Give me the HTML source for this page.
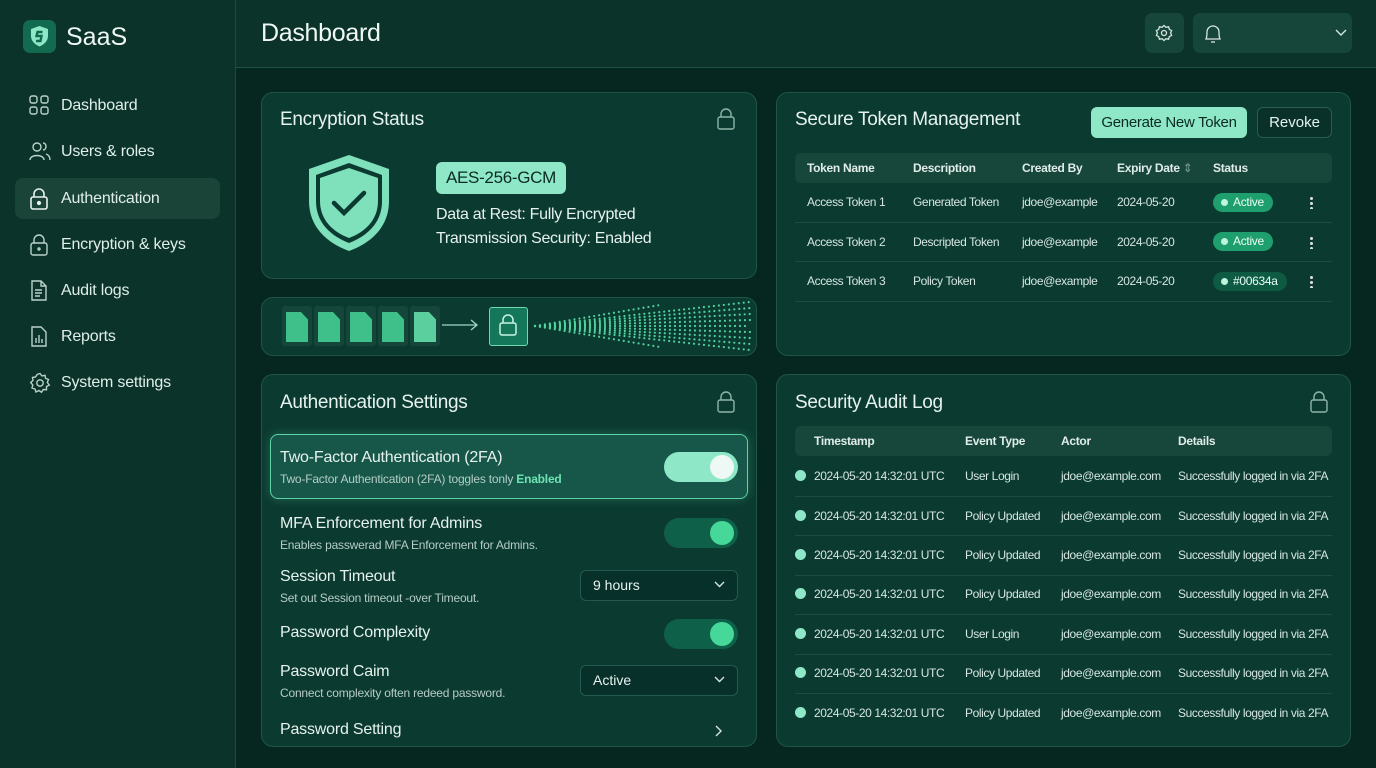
<!DOCTYPE html>
<html><head><meta charset="utf-8"><style>
*{box-sizing:border-box;margin:0;padding:0}
body{width:1376px;height:768px;overflow:hidden;background:#062620;font-family:"Liberation Sans",sans-serif;color:#e6f2ee;position:relative}
.abs{position:absolute}
.side{left:0;top:0;width:236px;height:768px;background:#0b3329;border-right:1px solid #1c4a3e}
.hdr{left:236px;top:0;width:1140px;height:68px;background:#0b3329;border-bottom:1px solid #1f5244}
.card{position:absolute;background:#0b3a30;border:1px solid #1f5547;border-radius:12px}
.nav{position:absolute;left:15px;width:205px;height:41px;border-radius:8px;font-size:16px;color:#dfeee9;padding-left:46px;line-height:41px;letter-spacing:-0.2px}
.nav svg{position:absolute;left:14px;top:10px}
.t{position:absolute;white-space:nowrap}
.th{font-size:12px;font-weight:bold;color:#e0ece8;letter-spacing:-0.3px}
.td{font-size:12px;color:#d6e6e1;letter-spacing:-0.4px}
.line{position:absolute;height:1px;background:#1d4d41}
.tog{position:absolute;width:74px;height:30px;border-radius:15px;background:#0f6048}
.tog i{position:absolute;right:4px;top:3px;width:24px;height:24px;border-radius:50%;background:#45d898}
.sel{position:absolute;width:158px;height:31px;border:1px solid #245a4c;border-radius:6px;background:#08302a;font-size:14px;padding-left:12px;line-height:29px}
.sel svg{position:absolute;right:12px;top:10px}
.pill{position:absolute;height:19px;border-radius:10px;background:#1f9e6e;font-size:12px;line-height:19px;padding:0 9px 0 20px;color:#e8fff5;letter-spacing:-0.3px}
.pill:before{content:"";position:absolute;left:8px;top:6px;width:7px;height:7px;border-radius:50%;background:#bff5dc}
.dot{position:absolute;left:795px;width:11px;height:11px;border-radius:50%;background:#8ee8c8}
.kebab{position:absolute;left:1310px;width:3px;height:13px;background:radial-gradient(circle,#ddd 1.4px,transparent 1.6px) 0 0/3px 5px}
.doc{position:absolute;top:312px;width:22px;height:30px;background:#3fbf8a;clip-path:polygon(0 0,68% 0,100% 25%,100% 100%,0 100%)}
.docw{position:absolute;top:306px;width:30px;height:40px;background:#14463a;border-radius:3px}
.ttl{font-size:19px;letter-spacing:-0.3px}
</style></head><body>
<div class="abs side"></div>
<div class="abs hdr"></div>
<div class="abs" style="left:23px;top:20px;width:33px;height:33px;border-radius:7px;background:#136b4f"></div>
<svg class="abs" style="left:27px;top:24px" width="25" height="25" viewBox="0 0 25 25"><path d="M12.5 2 L21 5 V12 C21 17 17 20.5 12.5 22.5 C8 20.5 4 17 4 12 V5Z" fill="#8ee8c8"/><path d="M15.5 8 H10.5 L9.5 12 H14.5 L13.5 17 H9" stroke="#136b4f" stroke-width="2.4" fill="none"/></svg>
<div class="t" style="left:66px;top:23px;font-size:25px;color:#f0f8f5">SaaS</div>
<div class="nav" style="top:85px"><svg width="20" height="20" fill="none" stroke="#b9d2ca" stroke-width="1.4"><rect x="1" y="1" width="7" height="7" rx="2"/><rect x="12" y="1" width="7" height="7" rx="2"/><rect x="1" y="12" width="7" height="7" rx="2"/><rect x="12" y="12" width="7" height="7" rx="2"/></svg>Dashboard</div>
<div class="nav" style="top:131px"><svg width="22" height="20" fill="none" stroke="#b9d2ca" stroke-width="1.4"><circle cx="8" cy="6" r="4"/><path d="M1 19 C1 13 15 13 15 19"/><path d="M14 2 C18 2 18 9 14 9 M17 13 C20 14 21 16 21 19"/></svg>Users &amp; roles</div>
<div class="nav" style="top:178px;background:#1a4438"><svg width="20" height="22" fill="none" stroke="#e6f2ee" stroke-width="1.6"><rect x="2" y="9" width="16" height="12" rx="2"/><path d="M5 9 V6 a5 5 0 0 1 10 0 V9"/><circle cx="10" cy="15" r="1.3" fill="#e6f2ee"/></svg>Authentication</div>
<div class="nav" style="top:224px"><svg width="20" height="22" fill="none" stroke="#b9d2ca" stroke-width="1.4"><rect x="2" y="9" width="16" height="12" rx="2"/><path d="M5 9 V6 a5 5 0 0 1 10 0 V9"/><circle cx="10" cy="15" r="1"/></svg>Encryption &amp; keys</div>
<div class="nav" style="top:270px"><svg width="20" height="22" fill="none" stroke="#b9d2ca" stroke-width="1.4"><path d="M3 1 H12 L17 6 V20 H3Z M12 1 V6 H17 M6 10 H13 M6 13 H13 M6 16 H11"/></svg>Audit logs</div>
<div class="nav" style="top:316px"><svg width="20" height="22" fill="none" stroke="#b9d2ca" stroke-width="1.4"><path d="M3 1 H12 L17 6 V20 H3Z M7 17 V12 M10 17 V9 M13 17 V13"/></svg>Reports</div>
<div class="nav" style="top:362px"><svg width="22" height="22" fill="none" stroke="#b9d2ca" stroke-width="1.4"><circle cx="11" cy="11" r="3.2"/><path d="M11 1.5 L13 4 L16 3.2 L16.5 6.3 L19.5 7.5 L18.3 10.5 L20.3 13 L17.5 14.5 L17.5 17.7 L14.3 17.5 L12.5 20.3 L10 18.5 L7 20 L6 17 L3 16 L3.8 13 L1.7 10.5 L4 8.5 L3.5 5.5 L6.5 5 L8.3 2.3Z"/></svg>System settings</div>
<div class="t" style="left:261px;top:19px;font-size:25px;color:#f0f8f5;letter-spacing:-0.3px">Dashboard</div>
<div class="abs" style="left:1145px;top:13px;width:39px;height:40px;border-radius:7px;background:#164539"></div>
<svg class="abs" style="left:1155px;top:24px" width="18" height="18" fill="none" stroke="#d5e6e0" stroke-width="1.3"><circle cx="9" cy="9" r="2.5"/><path d="M9 1.5 L11 3.3 L13.6 2.8 L14.3 5.3 L16.6 6.6 L15.6 9 L16.6 11.4 L14.3 12.7 L13.6 15.2 L11 14.7 L9 16.5 L7 14.7 L4.4 15.2 L3.7 12.7 L1.4 11.4 L2.4 9 L1.4 6.6 L3.7 5.3 L4.4 2.8 L7 3.3Z"/></svg>
<div class="abs" style="left:1193px;top:13px;width:159px;height:40px;border-radius:7px;background:#164539"></div>
<svg class="abs" style="left:1203px;top:23px" width="20" height="22" fill="none" stroke="#d5e6e0" stroke-width="1.3"><path d="M3 16 C4 14 4 12 4 9 a6 6 0 0 1 12 0 C16 12 16 14 17 16Z M8 19 H12"/></svg>
<svg class="abs" style="left:1335px;top:29px" width="12" height="8" fill="none" stroke="#d5e6e0" stroke-width="1.4"><path d="M1 1 L6 6 L11 1"/></svg>

<div class="card" style="left:261px;top:92px;width:496px;height:187px"></div>
<div class="t ttl" style="left:280px;top:109px">Encryption Status</div>
<svg class="abs" style="left:716px;top:108px" width="20" height="22" fill="none" stroke="#8fb5a9" stroke-width="1.4"><rect x="2" y="9" width="16" height="12" rx="2"/><path d="M5 9 V6 a5 5 0 0 1 10 0 V9"/></svg>
<svg class="abs" style="left:305px;top:153px" width="88" height="100" viewBox="0 0 88 100"><path d="M44 2 L84 16 V48 C84 74 66 90 44 98 C22 90 4 74 4 48 V16Z" fill="#7fe0bc"/><path d="M44 10 L77 22 V48 C77 70 62 83 44 90 C26 83 11 70 11 48 V22Z" fill="#0b3a30"/><path d="M44 15 L73 25 V48 C73 67 60 79 44 85 C28 79 15 67 15 48 V25Z" fill="#7fe0bc"/><path d="M29 50 L39 60 L59 40" stroke="#0b3a30" stroke-width="4.5" fill="none" stroke-linecap="round"/></svg>
<div class="abs" style="left:436px;top:162px;width:130px;height:32px;border-radius:6px;background:#8ee8c8;color:#0c2a23;font-size:17px;text-align:center;line-height:32px;letter-spacing:-0.3px">AES-256-GCM</div>
<div class="t" style="left:436px;top:203px;font-size:16px;line-height:24px;letter-spacing:-0.3px">Data at Rest: Fully Encrypted<br>Transmission Security: Enabled</div>

<div class="card" style="left:261px;top:297px;width:496px;height:59px"></div>
<div class="docw" style="left:282px"></div><div class="docw" style="left:314px"></div><div class="docw" style="left:346px"></div><div class="docw" style="left:378px"></div><div class="docw" style="left:410px"></div>
<div class="doc" style="left:286px"></div><div class="doc" style="left:318px"></div><div class="doc" style="left:350px"></div><div class="doc" style="left:382px"></div><div class="doc" style="left:414px;background:#5ccf9e"></div>
<svg class="abs" style="left:440px;top:318px" width="40" height="14" fill="none" stroke="#9fd8c2" stroke-width="1.3"><path d="M2 7 H37 M31 2 L37 7 L31 12"/></svg>
<div class="abs" style="left:489px;top:307px;width:39px;height:39px;border-radius:3px;background:#15775a;border:1px solid #6fd8b0"></div>
<svg class="abs" style="left:498px;top:313px" width="20" height="24" fill="none" stroke="#c8f3e2" stroke-width="1.5"><rect x="2" y="10" width="16" height="12" rx="2"/><path d="M5 10 V7 a5 5 0 0 1 10 0 V10"/></svg>
<svg class="abs" style="left:530px;top:298px" width="226" height="57" fill="none" stroke="#4fd39e" stroke-width="2.2" stroke-linecap="round" stroke-dasharray="0 5">
<path d="M5 28 L220 4"/><path d="M5 28 L220 10"/><path d="M5 28 L220 16"/><path d="M5 28 L220 22"/><path d="M5 28 L220 28"/><path d="M5 28 L220 34"/><path d="M5 28 L220 40"/><path d="M5 28 L220 46"/><path d="M5 28 L220 52"/><path d="M5 28 L130 7"/><path d="M5 28 L130 49"/>
</svg>

<div class="card" style="left:261px;top:374px;width:496px;height:373px"></div>
<div class="t ttl" style="left:280px;top:392px">Authentication Settings</div>
<svg class="abs" style="left:716px;top:391px" width="20" height="22" fill="none" stroke="#8fb5a9" stroke-width="1.4"><rect x="2" y="9" width="16" height="12" rx="2"/><path d="M5 9 V6 a5 5 0 0 1 10 0 V9"/></svg>
<div class="abs" style="left:270px;top:434px;width:478px;height:65px;border-radius:8px;background:#17574a;border:1.5px solid #5ed3a6;box-shadow:0 0 10px rgba(90,210,160,.3)"></div>
<div class="t" style="left:280px;top:449px;font-size:16px;letter-spacing:-0.2px">Two-Factor Authentication (2FA)</div>
<div class="t" style="left:280px;top:472px;font-size:12px;color:#b5ccc5;letter-spacing:-0.2px">Two-Factor Authentication (2FA) toggles tonly <b style="color:#6de3b2">Enabled</b></div>
<div class="tog" style="left:664px;top:452px;background:#8ee8c8"><i style="background:#eef8f4"></i></div>
<div class="t" style="left:280px;top:515px;font-size:16px;letter-spacing:-0.2px">MFA Enforcement for Admins</div>
<div class="t" style="left:280px;top:538px;font-size:12px;color:#b5ccc5;letter-spacing:-0.2px">Enables passwerad MFA Enforcement for Admins.</div>
<div class="tog" style="left:664px;top:518px"><i></i></div>
<div class="t" style="left:280px;top:568px;font-size:16px;letter-spacing:-0.2px">Session Timeout</div>
<div class="t" style="left:280px;top:591px;font-size:12px;color:#b5ccc5;letter-spacing:-0.2px">Set out Session timeout -over Timeout.</div>
<div class="sel" style="left:580px;top:570px">9 hours<svg width="11" height="7" fill="none" stroke="#d5e6e0" stroke-width="1.4"><path d="M1 1 L5.5 5.5 L10 1"/></svg></div>
<div class="t" style="left:280px;top:624px;font-size:16px;letter-spacing:-0.2px">Password Complexity</div>
<div class="tog" style="left:664px;top:619px"><i></i></div>
<div class="t" style="left:280px;top:663px;font-size:16px;letter-spacing:-0.2px">Password Caim</div>
<div class="t" style="left:280px;top:686px;font-size:12px;color:#b5ccc5;letter-spacing:-0.2px">Connect complexity often redeed password.</div>
<div class="sel" style="left:580px;top:665px">Active<svg width="11" height="7" fill="none" stroke="#d5e6e0" stroke-width="1.4"><path d="M1 1 L5.5 5.5 L10 1"/></svg></div>
<div class="t" style="left:280px;top:721px;font-size:16px;letter-spacing:-0.2px">Password Setting</div>
<svg class="abs" style="left:715px;top:725px" width="8" height="12" fill="none" stroke="#d5e6e0" stroke-width="1.4"><path d="M1 1 L6 6 L1 11"/></svg>

<div class="card" style="left:776px;top:92px;width:575px;height:264px"></div>
<div class="t ttl" style="left:795px;top:109px">Secure Token Management</div>
<div class="abs" style="left:1091px;top:107px;width:156px;height:31px;border-radius:6px;background:#8ee8c8;color:#0c2a23;font-size:15px;text-align:center;line-height:31px;letter-spacing:-0.3px">Generate New Token</div>
<div class="abs" style="left:1257px;top:107px;width:75px;height:31px;border-radius:6px;border:1px solid #2a5c4f;font-size:15px;text-align:center;line-height:29px;background:#0a3129">Revoke</div>
<div class="abs" style="left:795px;top:153px;width:537px;height:30px;border-radius:6px;background:#17473b"></div>
<div class="t th" style="left:807px;top:161px">Token Name</div><div class="t th" style="left:913px;top:161px">Description</div><div class="t th" style="left:1022px;top:161px">Created By</div><div class="t th" style="left:1117px;top:161px">Expiry Date <span style="color:#7fa197;font-weight:normal">⇕</span></div><div class="t th" style="left:1213px;top:161px">Status</div>
<div class="t td" style="left:807px;top:195px">Access Token 1</div><div class="t td" style="left:913px;top:195px">Generated Token</div><div class="t td" style="left:1022px;top:195px">jdoe@example</div><div class="t td" style="left:1117px;top:195px">2024-05-20</div><div class="pill" style="left:1213px;top:193px">Active</div><div class="kebab" style="top:196px"></div>
<div class="line" style="left:795px;top:222px;width:537px"></div>
<div class="t td" style="left:807px;top:235px">Access Token 2</div><div class="t td" style="left:913px;top:235px">Descripted Token</div><div class="t td" style="left:1022px;top:235px">jdoe@example</div><div class="t td" style="left:1117px;top:235px">2024-05-20</div><div class="pill" style="left:1213px;top:232px">Active</div><div class="kebab" style="top:236px"></div>
<div class="line" style="left:795px;top:261px;width:537px"></div>
<div class="t td" style="left:807px;top:274px">Access Token 3</div><div class="t td" style="left:913px;top:274px">Policy Token</div><div class="t td" style="left:1022px;top:274px">jdoe@example</div><div class="t td" style="left:1117px;top:274px">2024-05-20</div><div class="pill" style="left:1213px;top:272px;background:#0f5a43">#00634a</div><div class="kebab" style="top:275px"></div>
<div class="line" style="left:795px;top:301px;width:537px"></div>

<div class="card" style="left:776px;top:374px;width:575px;height:373px"></div>
<div class="t ttl" style="left:795px;top:392px">Security Audit Log</div>
<svg class="abs" style="left:1309px;top:391px" width="20" height="22" fill="none" stroke="#8fb5a9" stroke-width="1.4"><rect x="2" y="9" width="16" height="12" rx="2"/><path d="M5 9 V6 a5 5 0 0 1 10 0 V9"/></svg>
<div class="abs" style="left:795px;top:426px;width:537px;height:30px;border-radius:6px;background:#17473b"></div>
<div class="t th" style="left:814px;top:434px">Timestamp</div><div class="t th" style="left:965px;top:434px">Event Type</div><div class="t th" style="left:1061px;top:434px">Actor</div><div class="t th" style="left:1178px;top:434px">Details</div>
<div class="dot" style="top:470px"></div><div class="t td" style="left:814px;top:469px">2024-05-20 14:32:01 UTC</div><div class="t td" style="left:965px;top:469px">User Login</div><div class="t td" style="left:1061px;top:469px">jdoe@example.com</div><div class="t td" style="left:1178px;top:469px">Successfully logged in via 2FA</div><div class="line" style="left:795px;top:496px;width:537px"></div>
<div class="dot" style="top:510px"></div><div class="t td" style="left:814px;top:509px">2024-05-20 14:32:01 UTC</div><div class="t td" style="left:965px;top:509px">Policy Updated</div><div class="t td" style="left:1061px;top:509px">jdoe@example.com</div><div class="t td" style="left:1178px;top:509px">Successfully logged in via 2FA</div><div class="line" style="left:795px;top:535px;width:537px"></div>
<div class="dot" style="top:549px"></div><div class="t td" style="left:814px;top:548px">2024-05-20 14:32:01 UTC</div><div class="t td" style="left:965px;top:548px">Policy Updated</div><div class="t td" style="left:1061px;top:548px">jdoe@example.com</div><div class="t td" style="left:1178px;top:548px">Successfully logged in via 2FA</div><div class="line" style="left:795px;top:575px;width:537px"></div>
<div class="dot" style="top:588px"></div><div class="t td" style="left:814px;top:587px">2024-05-20 14:32:01 UTC</div><div class="t td" style="left:965px;top:587px">Policy Updated</div><div class="t td" style="left:1061px;top:587px">jdoe@example.com</div><div class="t td" style="left:1178px;top:587px">Successfully logged in via 2FA</div><div class="line" style="left:795px;top:614px;width:537px"></div>
<div class="dot" style="top:628px"></div><div class="t td" style="left:814px;top:627px">2024-05-20 14:32:01 UTC</div><div class="t td" style="left:965px;top:627px">User Login</div><div class="t td" style="left:1061px;top:627px">jdoe@example.com</div><div class="t td" style="left:1178px;top:627px">Successfully logged in via 2FA</div><div class="line" style="left:795px;top:654px;width:537px"></div>
<div class="dot" style="top:667px"></div><div class="t td" style="left:814px;top:666px">2024-05-20 14:32:01 UTC</div><div class="t td" style="left:965px;top:666px">Policy Updated</div><div class="t td" style="left:1061px;top:666px">jdoe@example.com</div><div class="t td" style="left:1178px;top:666px">Successfully logged in via 2FA</div><div class="line" style="left:795px;top:693px;width:537px"></div>
<div class="dot" style="top:707px"></div><div class="t td" style="left:814px;top:706px">2024-05-20 14:32:01 UTC</div><div class="t td" style="left:965px;top:706px">Policy Updated</div><div class="t td" style="left:1061px;top:706px">jdoe@example.com</div><div class="t td" style="left:1178px;top:706px">Successfully logged in via 2FA</div>
</body></html>
